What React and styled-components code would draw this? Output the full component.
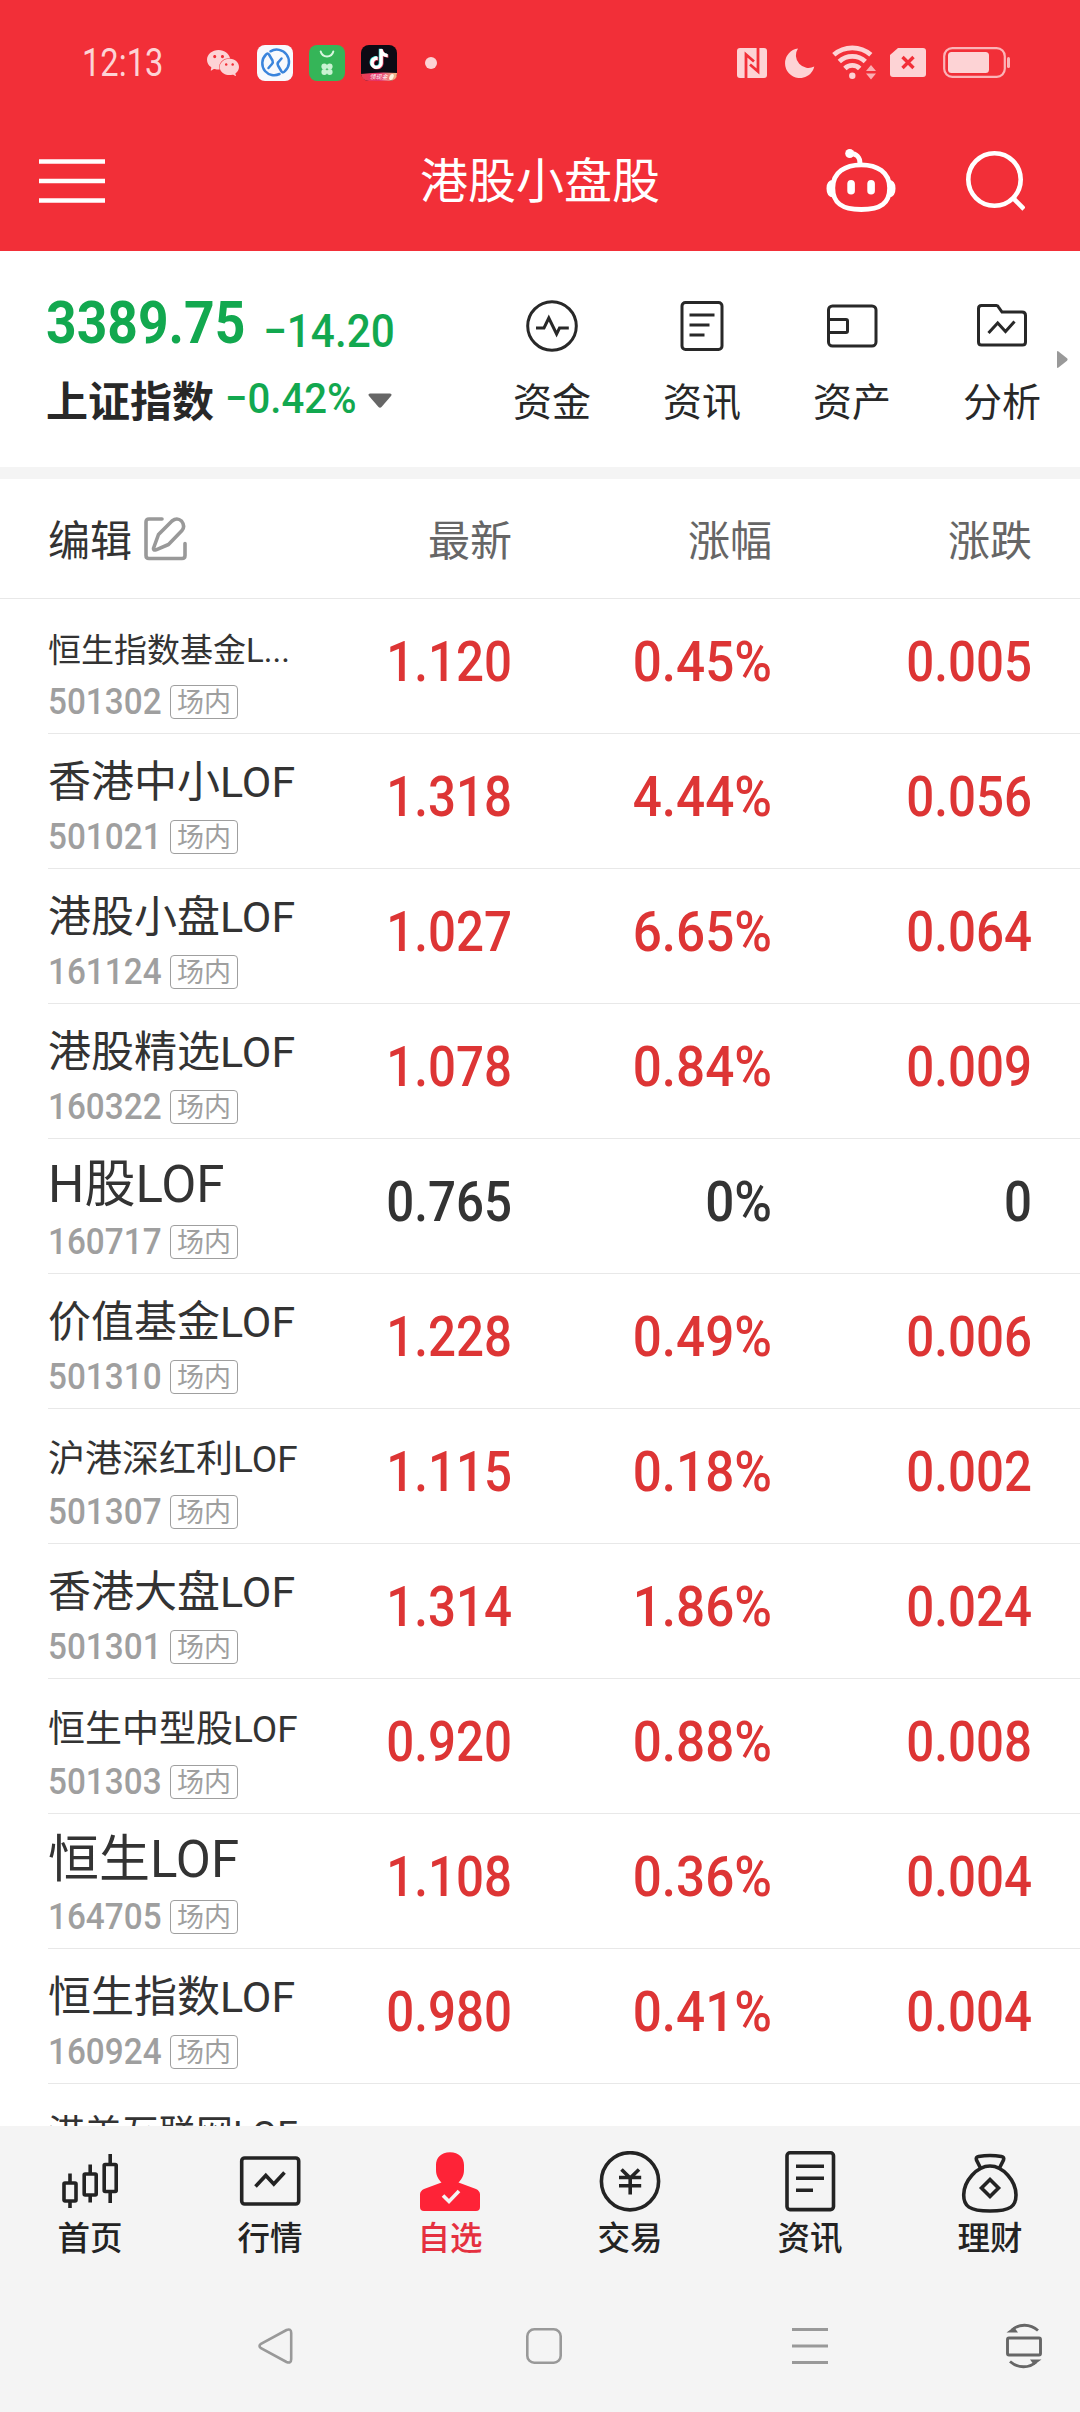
import React from 'react'
import { SiTiktok, SiWechat } from 'react-icons/si'
import styled, { createGlobalStyle } from 'styled-components'

const RED = '#f22f38'
const STATUS_TINT = '#fdd3d5'

const stocks = [
  { name: '恒生指数基金L...', code: '501302', price: '1.120', percent: '0.45%', change: '0.005', size: 33 },
  { name: '香港中小LOF', code: '501021', price: '1.318', percent: '4.44%', change: '0.056', size: 43 },
  { name: '港股小盘LOF', code: '161124', price: '1.027', percent: '6.65%', change: '0.064', size: 43 },
  { name: '港股精选LOF', code: '160322', price: '1.078', percent: '0.84%', change: '0.009', size: 43 },
  { name: 'H股LOF', code: '160717', price: '0.765', percent: '0%', change: '0', size: 51, flat: true },
  { name: '价值基金LOF', code: '501310', price: '1.228', percent: '0.49%', change: '0.006', size: 43 },
  { name: '沪港深红利LOF', code: '501307', price: '1.115', percent: '0.18%', change: '0.002', size: 37 },
  { name: '香港大盘LOF', code: '501301', price: '1.314', percent: '1.86%', change: '0.024', size: 43 },
  { name: '恒生中型股LOF', code: '501303', price: '0.920', percent: '0.88%', change: '0.008', size: 37 },
  { name: '恒生LOF', code: '164705', price: '1.108', percent: '0.36%', change: '0.004', size: 51 },
  { name: '恒生指数LOF', code: '160924', price: '0.980', percent: '0.41%', change: '0.004', size: 43 },
  { name: '港美互联网LOF', size: 37 },
]

const tools = [
  { label: '资金', icon: <FundsIcon /> },
  { label: '资讯', icon: <NewsIcon /> },
  { label: '资产', icon: <AssetsIcon /> },
  { label: '分析', icon: <AnalysisIcon /> },
]

const tabs = [
  { label: '首页', icon: <CandlesIcon /> },
  { label: '行情', icon: <MarketIcon /> },
  { label: '自选', icon: <PersonIcon />, active: true },
  { label: '交易', icon: <YuanIcon /> },
  { label: '资讯', icon: <ArticleIcon /> },
  { label: '理财', icon: <PurseIcon /> },
]

export default function App() {
  return (
    <Screen>
      <GlobalStyle />
      <Header>
        <StatusBar />
        <NavBar>
          <NavSide>
            <MenuIcon />
          </NavSide>
          <Title>港股小盘股</Title>
          <NavSide $end>
            <RobotIcon />
            <SearchIcon />
          </NavSide>
        </NavBar>
      </Header>

      <IndexPanel>
        <IndexInfo>
          <IndexLine>
            <IndexPrice>3389.75</IndexPrice>
            <IndexChange>−14.20</IndexChange>
          </IndexLine>
          <IndexLine>
            <IndexName>上证指数</IndexName>
            <IndexPercent>−0.42%</IndexPercent>
            <DropIcon width="24" height="16" viewBox="0 0 24 16">
              <path d="M2 0.5H22Q24.5 1 23 3L13.5 14Q12 15.600 10.500 14L1 3Q-0.500 1 2 0.500Z" fill="#666" />
            </DropIcon>
          </IndexLine>
        </IndexInfo>
        {tools.map((tool) => (
          <Tool key={tool.label}>
            {tool.icon}
            <ToolLabel>{tool.label}</ToolLabel>
          </Tool>
        ))}
        <MoreArrow width="11" height="17" viewBox="0 0 11 17">
          <path d="M0 1Q0-.5 1.500.5L10 7.300Q11.200 8.500 10 9.700L1.500 16.500Q0 17.500 0 16Z" fill="#999" />
        </MoreArrow>
      </IndexPanel>

      <TableHead>
        <EditButton>
          <EditText>编辑</EditText>
          <EditIcon />
        </EditButton>
        <HeadCell>最新</HeadCell>
        <HeadCell>涨幅</HeadCell>
        <HeadCell>涨跌</HeadCell>
      </TableHead>

      <List>
        {stocks.map((stock) => (
          <Row key={stock.name}>
            <div>
              <NameLine>
                <Name $size={stock.size}>{stock.name}</Name>
              </NameLine>
              {stock.code && (
                <Meta>
                  <Code>{stock.code}</Code>
                  <Tag>场内</Tag>
                </Meta>
              )}
            </div>
            <Value $flat={stock.flat}>{stock.price}</Value>
            <Value $flat={stock.flat} $stretch={0.915}>
              {stock.percent}
            </Value>
            <Value $flat={stock.flat}>{stock.change}</Value>
          </Row>
        ))}
      </List>

      <TabBar>
        {tabs.map((tab) => (
          <Tab key={tab.label}>
            {tab.icon}
            <TabLabel $active={tab.active}>{tab.label}</TabLabel>
          </Tab>
        ))}
      </TabBar>
      <SystemNav />
    </Screen>
  )
}

function StatusBar() {
  return (
    <Status>
      <Clock>12:13</Clock>
      <StatusItem $after={18}>
        <SiWechat size={32} color={STATUS_TINT} />
      </StatusItem>
      <StatusItem $after={16}>
        <svg width="36" height="36" viewBox="0 0 36 36">
          <rect width="36" height="36" rx="8" fill="#f7f9fd" />
          <g fill="none" stroke="#3a84dc" strokeWidth="2.500" strokeLinecap="round" strokeLinejoin="round">
            <path d="M13.500 6.300A12.300 12.300 0 0 1 28 26Q26 28.500 24.500 26.500L21 20.500Q20 18.500 21.500 17L24.500 13.500" />
            <path d="M22.500 29A12.300 12.300 0 0 1 8 26M8 26A12.300 12.300 0 0 1 9 9.500Q10.500 7.500 12 9.500L15.500 15.500Q16.300 17.500 15 19L11.500 23" />
          </g>
        </svg>
      </StatusItem>
      <StatusItem $after={16}>
        <svg width="36" height="36" viewBox="0 0 36 36">
          <rect width="36" height="36" rx="8" fill="#35b558" />
          <path d="M11.700 6.500A6.500 6.500 0 0 0 24.300 6.500" fill="none" stroke="#d9f7df" strokeWidth="2" strokeLinecap="round" />
          <g fill="#c9f3d2">
            <circle cx="15.300" cy="21.500" r="2.900" />
            <circle cx="20.700" cy="21.500" r="2.900" />
            <circle cx="15.300" cy="27" r="2.900" />
            <circle cx="20.700" cy="27" r="2.900" />
          </g>
        </svg>
      </StatusItem>
      <StatusItem $after={28}>
        <svg width="36" height="36" viewBox="0 0 36 36">
          <defs>
            <linearGradient id="banner">
              <stop offset="0" stopColor="#ee3f4e" />
              <stop offset="0.500" stopColor="#e2336f" />
              <stop offset="1" stopColor="#f6c08a" />
            </linearGradient>
          </defs>
          <rect width="36" height="36" rx="8" fill="#0c0a14" />
          <SiTiktok x="7.300" y="3.500" size={20} color="#3fe0dc" />
          <SiTiktok x="8.700" y="4.500" size={20} color="#f0405f" />
          <SiTiktok x="8" y="4" size={20} color="#fff" />
          <path d="M0 29Q18 26.500 36 28Q36 36 28 36H8Q1 36 0 29Z" fill="url(#banner)" />
          <BannerText x="8.500" y="34.300">领现金</BannerText>
          <ellipse cx="30.500" cy="32" rx="2" ry="3.200" fill="#fff3df" transform="rotate(25 30.500 32)" />
        </svg>
      </StatusItem>
      <Dot />
      <Spacer />
      <StatusItem $after={18}>
        <svg width="30" height="30" viewBox="0 0 30 30">
          <rect width="30" height="30" rx="3" fill={STATUS_TINT} />
          <path d="M9 30V6.500L17 13.500M21 0V23.500L13 16.500" fill="none" stroke={RED} strokeWidth="2.800" />
        </svg>
      </StatusItem>
      <StatusItem $after={17}>
        <svg width="30" height="30" viewBox="0 0 30 30">
          <path d="M13 0.600A14.800 14.800 0 1 0 29.300 18.500A12.500 12.500 0 0 1 13 0.600Z" fill={STATUS_TINT} />
        </svg>
      </StatusItem>
      <StatusItem $after={14}>
        <svg width="44" height="35" viewBox="0 0 44 35">
          <g fill="none" stroke={STATUS_TINT} strokeWidth="4.800">
            <path d="M1.800 9.800A28 28 0 0 1 38.800 9.800" />
            <path d="M7.300 16.600A19 19 0 0 1 33.300 16.600" />
            <path d="M12.900 23.500A10.500 10.500 0 0 1 27.700 23.500" />
          </g>
          <circle cx="20.300" cy="30.800" r="3.200" fill={STATUS_TINT} />
          <path d="M39 20L44 26H34ZM39 34.500L44 28.500H34Z" fill="#fbaeb2" />
        </svg>
      </StatusItem>
      <StatusItem $after={17}>
        <svg width="36" height="29" viewBox="0 0 36 29">
          <path d="M8 0H33Q36 0 36 3V26Q36 29 33 29H3Q0 29 0 26V7Z" fill={STATUS_TINT} />
          <path d="M12.500 9L23.500 20M23.500 9L12.500 20" stroke={RED} strokeWidth="3.400" />
        </svg>
      </StatusItem>
      <svg width="67" height="31" viewBox="0 0 67 31">
        <rect x="1.200" y="1.200" width="60.600" height="28.600" rx="8" fill="none" stroke="#fbb4b8" strokeWidth="2.200" />
        <rect x="5" y="5" width="41" height="21" rx="3.500" fill={STATUS_TINT} />
        <rect x="64" y="10" width="3" height="11" rx="1.500" fill="#fbb4b8" />
      </svg>
    </Status>
  )
}

function SystemNav() {
  return (
    <SystemBar>
      <SystemKey $before={258}>
        <svg width="35" height="36" viewBox="0 0 35 36" fill="none" stroke="#999" strokeWidth="2.600">
          <path d="M28.500 2Q33.200 0 33.200 5V31Q33.200 36 28.500 34L3 20.200Q0 18 3 15.800Z" />
        </svg>
      </SystemKey>
      <SystemKey $before={233}>
        <svg width="36" height="36" viewBox="0 0 36 36" fill="none" stroke="#999" strokeWidth="2.600">
          <rect x="1.300" y="1.300" width="33.400" height="33.400" rx="7" />
        </svg>
      </SystemKey>
      <SystemKey $before={230}>
        <svg width="36" height="36" viewBox="0 0 36 36" stroke="#999" strokeWidth="3">
          <path d="M0 1.500H36M0 18H36M0 34.500H36" />
        </svg>
      </SystemKey>
      <SystemKey $before={178}>
        <svg width="36" height="46" viewBox="0 0 36 46" fill="none" stroke="#666" strokeWidth="2.900">
          <rect x="1.500" y="15" width="33" height="17" rx="1.500" />
          <path d="M6 7C13 0.500 24 0.500 32 7.500M4 38.500C12 45.500 23 45.500 30 39" />
          <path d="M0.500 9.500L8 4L12 9.500ZM35.500 36.500L28 42L24 36.500Z" fill="#666" stroke="none" />
        </svg>
      </SystemKey>
    </SystemBar>
  )
}

function MenuIcon() {
  return (
    <svg width="66" height="44" viewBox="0 0 66 44" stroke="#fff" strokeWidth="4.600">
      <path d="M0 2.500H66M0 22H66M0 41.500H66" />
    </svg>
  )
}

function RobotIcon() {
  return (
    <svg width="70" height="64" viewBox="0 0 70 64" fill="none" stroke="#fff" strokeWidth="4.800">
      <path d="M35.300 15.800C51 15.800 63.600 23 63.600 39C63.600 54 55 60.500 35.300 60.500S6.800 54 6.800 39C6.800 23 19.500 15.800 35.300 15.800Z" />
      <path d="M24 4.500C30.500 4.500 34.300 8 34 15" />
      <g fill="#fff" stroke="none">
        <circle cx="23.700" cy="4.500" r="4.500" />
        <rect x="21.300" y="31" width="7.600" height="14.500" rx="3.800" />
        <rect x="41.300" y="31" width="7.600" height="14.500" rx="3.800" />
        <path d="M7 31Q0.500 31 0.500 39.500T7 48.500ZM63 31Q69.500 31 69.500 39.500T63 48.500Z" />
      </g>
    </svg>
  )
}

function SearchIcon() {
  return (
    <svg width="59" height="60" viewBox="0 0 59 60" fill="none" stroke="#fff" strokeWidth="4.600">
      <circle cx="28.500" cy="28.500" r="26.200" />
      <path d="M46.500 46.500L58 58" />
    </svg>
  )
}

function EditIcon() {
  return (
    <svg width="43" height="44" viewBox="0 0 43 44" fill="none" stroke="#999" strokeWidth="3.600" strokeLinecap="round" strokeLinejoin="round">
      <path d="M18 2H5Q2 2 2 5V38.500Q2 41.500 5 41.500H38Q41 41.500 41 38.500V26.500" />
      <path d="M9.600 31L14.500 17.500L28 4Q33 0 37.500 4Q41.500 9 38 13.500L24.500 27.500L12 32.800Q9 33.500 9.600 31Z" />
    </svg>
  )
}

function FundsIcon() {
  return (
    <ToolIcon>
      <circle cx="26" cy="26" r="24.300" />
      <path d="M10 28H18L22.800 18L30.600 34L33.500 28H42.800" />
    </ToolIcon>
  )
}

function NewsIcon() {
  return (
    <ToolIcon>
      <rect x="6" y="2.500" width="40" height="47" rx="3.500" />
      <path d="M13.500 15H38.500M13.500 25H33.500M13.500 35H28.500" />
    </ToolIcon>
  )
}

function AssetsIcon() {
  return (
    <ToolIcon>
      <rect x="2.500" y="6" width="47.500" height="40" rx="4" />
      <path d="M2.500 19.500H20Q21.500 19.500 21.500 21V31Q21.500 32.500 20 32.500H2.500" />
    </ToolIcon>
  )
}

function AnalysisIcon() {
  return (
    <ToolIcon>
      <path d="M2.500 8.500Q2.500 5.500 5.500 5.500H20.500Q22 5.500 22.500 7L26 12H46Q49.500 12 49.500 15.500V42Q49.500 45 46.500 45H5.500Q2.500 45 2.500 42Z" />
      <path d="M12.500 33L21.700 23L29.500 31.500L38.500 21.500" />
    </ToolIcon>
  )
}

function CandlesIcon() {
  return (
    <TabIcon>
      <rect x="5" y="32" width="12" height="18" rx="1" />
      <rect x="25.200" y="23" width="12" height="21" rx="1" />
      <rect x="45.200" y="13.500" width="12" height="27" rx="1" />
      <path d="M11 22.500V32M11 50V57M31.200 13.500V23M31.200 44V51.500M51.200 3V13.500M51.200 40.500V52" />
    </TabIcon>
  )
}

function MarketIcon() {
  return (
    <TabIcon>
      <rect x="2.700" y="7" width="57" height="46" rx="3" />
      <path d="M16.500 35.500L26.800 24.500L34.800 33L45.500 21.500" />
    </TabIcon>
  )
}

function PersonIcon() {
  return (
    <TabIcon>
      <path
        d="M31 1.300C40 1.300 45 7 45 14V19C45 25 42 29 39.500 31.500L57 38Q61 40 61 43.500V56Q61 60 57 60H5Q1 60 1 56V43.500Q1 40 5 38L22.500 31.500C20 29 17 25 17 19V14C17 7 22 1.300 31 1.300Z"
        fill="#fe2337"
        stroke="none"
      />
      <path d="M24 44.500L30 50.500L40 40" stroke="#f4f4f4" />
    </TabIcon>
  )
}

function YuanIcon() {
  return (
    <TabIcon>
      <circle cx="31" cy="30.300" r="28.600" />
      <path d="M22.500 18.500L31.200 27L40 18.500M20 26.500H42.200M20 34.700H42.200M31.200 26V43.500" />
    </TabIcon>
  )
}

function ArticleIcon() {
  return (
    <TabIcon>
      <rect x="8" y="1.800" width="46.500" height="56.800" rx="3" />
      <path d="M17 15.300H45M17 27.300H45M17 39.300H34" />
    </TabIcon>
  )
}

function PurseIcon() {
  return (
    <TabIcon>
      <path d="M31 15C18 15 4.700 30 4.700 44C4.700 55 10 60 31 60S57 55 57 44C57 30 44 15 31 15Z" />
      <path d="M21.500 17L17.500 9Q16.500 6 19.500 5.500Q31 3.500 42.500 5.500Q45.500 6 44.500 9L40.500 17" />
      <path d="M31 28.500L39.500 37L31 45.500L22.500 37Z" />
    </TabIcon>
  )
}

const GlobalStyle = createGlobalStyle`
  * {
    box-sizing: border-box;
  }

  body {
    margin: 0;
    font-family: Roboto, 'Noto Sans CJK SC', sans-serif;
  }

  svg {
    display: block;
    flex-shrink: 0;
  }
`

const Screen = styled.div`
  display: flex;
  flex-direction: column;
  width: 1080px;
  height: 2412px;
  overflow: hidden;
  background: #fff;
`

const Header = styled.header`
  height: 251px;
  flex-shrink: 0;
  background: ${RED};
`

const Status = styled.div`
  display: flex;
  align-items: center;
  height: 124px;
  padding: 1px 70px 0 82px;
`

const Clock = styled.span`
  width: 125px;
  font-size: 38px;
  line-height: 44px;
  color: ${STATUS_TINT};
  transform: scaleX(0.86);
  transform-origin: left;
`

const StatusItem = styled.div`
  margin-right: ${(props) => props.$after}px;
`

const BannerText = styled.text`
  font-size: 6px;
  font-style: italic;
  fill: #fff;
`

const Dot = styled.div`
  width: 12px;
  height: 12px;
  border-radius: 50%;
  background: ${STATUS_TINT};
`

const Spacer = styled.div`
  flex: 1;
`

const NavBar = styled.nav`
  display: grid;
  grid-template-columns: 1fr auto 1fr;
  align-items: center;
  height: 113px;
  padding: 0 55px 0 39px;
`

const NavSide = styled.div`
  display: flex;
  align-items: center;
  justify-content: ${(props) => (props.$end ? 'flex-end' : 'flex-start')};
  gap: 70px;
`

const Title = styled.h1`
  margin: 0;
  padding: 3px 0 0 16px;
  font-size: 48px;
  font-weight: 400;
  line-height: 60px;
  color: #fff;
`

const IndexPanel = styled.section`
  position: relative;
  display: flex;
  flex-shrink: 0;
  height: 228px;
  border-bottom: 12px solid #f4f4f4;
`

const IndexInfo = styled.div`
  width: 477px;
  padding: 41px 0 0 46px;
`

const IndexLine = styled.div`
  display: flex;
  align-items: flex-start;
  height: 80px;
`

const GreenNumber = styled.span`
  line-height: 60px;
  color: #12a84f;
  transform-origin: left;
`

const IndexPrice = styled(GreenNumber)`
  width: 217px;
  margin-top: 1px;
  font-size: 60px;
  font-weight: 700;
  transform: scaleX(0.89);
`

const IndexChange = styled(GreenNumber)`
  padding-top: 9px;
  font-size: 46px;
  font-weight: 500;
  transform: scaleX(0.92);
`

const IndexName = styled.span`
  width: 179px;
  padding-top: 1px;
  font-size: 42px;
  font-weight: 700;
  line-height: 60px;
  color: #282828;
`

const IndexPercent = styled(GreenNumber)`
  width: 143px;
  margin-top: -3px;
  font-size: 42px;
  font-weight: 500;
  transform: scaleX(0.955);
`

const DropIcon = styled.svg`
  margin-top: 21px;
`

const Tool = styled.div`
  display: flex;
  flex-direction: column;
  align-items: center;
  width: 150px;
  padding-top: 49px;
`

const ToolIcon = styled.svg.attrs({ viewBox: '0 0 52 52' })`
  width: 52px;
  height: 52px;
  fill: none;
  stroke: #282828;
  stroke-width: 3;
`

const ToolLabel = styled.span`
  margin-top: 26px;
  font-size: 39px;
  line-height: 50px;
  color: #282828;
`

const MoreArrow = styled.svg`
  position: absolute;
  top: 100px;
  right: 12px;
`

const columns = '260px 204px 260px 260px'

const TableHead = styled.div`
  display: grid;
  grid-template-columns: ${columns};
  align-items: center;
  flex-shrink: 0;
  height: 120px;
  padding-left: 48px;
  border-bottom: 1px solid #e8e8e8;
  font-size: 42px;
  line-height: 60px;
`

const EditButton = styled.div`
  display: flex;
  align-items: center;
  gap: 12px;
  color: #333;
`

const EditText = styled.span`
  padding-top: 6px;
`

const HeadCell = styled.div`
  padding-top: 6px;
  text-align: right;
  color: #666;
`

const List = styled.div`
  flex: 1;
  min-height: 0;
  overflow: hidden;
`

const Row = styled.div`
  display: grid;
  grid-template-columns: ${columns};
  height: 135px;
  margin-left: 48px;
  border-bottom: 1px solid #e8e8e8;
`

const NameLine = styled.div`
  height: 60px;
  margin-top: 16px;
  font-size: 51px;
  line-height: 60px;
  white-space: nowrap;
`

const Name = styled.span`
  font-size: ${(props) => props.$size}px;
  line-height: 1;
  color: #333;
`

const Meta = styled.div`
  display: flex;
  align-items: center;
  height: 34px;
  margin-top: 10px;
  color: #9f9f9f;
`

const Code = styled.span`
  width: 122px;
  font-size: 36px;
  font-weight: 500;
  line-height: 34px;
  transform: scaleX(0.925);
  transform-origin: left;
`

const Tag = styled.span`
  width: 68px;
  height: 34px;
  border: 1px solid #9f9f9f;
  border-radius: 4px;
  font-size: 27px;
  line-height: 34px;
  text-align: center;
`

const Value = styled.div`
  padding-top: 33px;
  font-size: 56px;
  font-weight: 500;
  line-height: 60px;
  text-align: right;
  color: ${(props) => (props.$flat ? '#333' : '#dd3535')};
  transform: scaleX(${(props) => props.$stretch ?? 0.88});
  transform-origin: right;
`

const TabBar = styled.div`
  display: grid;
  grid-template-columns: repeat(6, 1fr);
  flex-shrink: 0;
  height: 154px;
  background: #f4f4f4;
`

const Tab = styled.div`
  display: flex;
  flex-direction: column;
  align-items: center;
  padding-top: 25px;
`

const TabIcon = styled.svg.attrs({ viewBox: '0 0 62 62' })`
  width: 62px;
  height: 62px;
  fill: none;
  stroke: #232323;
  stroke-width: 3.6;
`

const TabLabel = styled.span`
  margin-top: 6px;
  font-size: 32.5px;
  font-weight: 500;
  line-height: 40px;
  color: ${(props) => (props.$active ? '#e5303f' : '#232323')};
`

const SystemBar = styled.div`
  display: flex;
  align-items: center;
  flex-shrink: 0;
  height: 132px;
  background: #f4f4f4;
`

const SystemKey = styled.div`
  margin-left: ${(props) => props.$before}px;
`
